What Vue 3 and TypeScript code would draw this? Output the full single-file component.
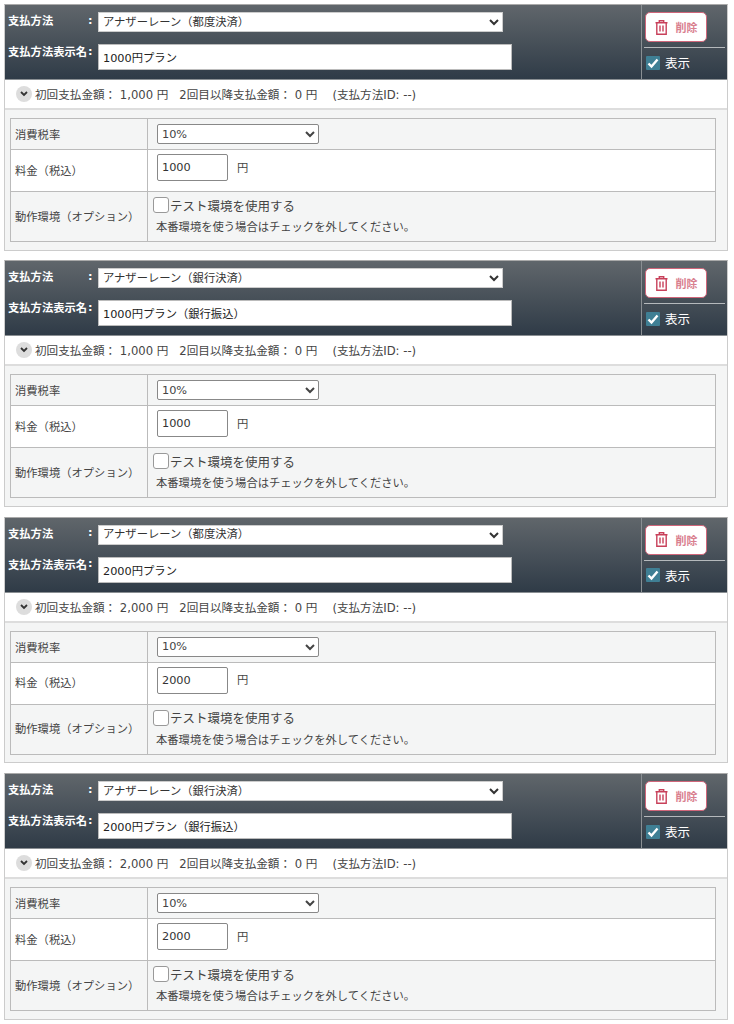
<script setup lang="ts">
interface Plan { method: string; name: string; first: string; price: string }
const plans: Plan[] = [
  { method: 'アナザーレーン（都度決済）', name: '1000円プラン', first: '1,000', price: '1000' },
  { method: 'アナザーレーン（銀行決済）', name: '1000円プラン（銀行振込）', first: '1,000', price: '1000' },
  { method: 'アナザーレーン（都度決済）', name: '2000円プラン', first: '2,000', price: '2000' },
  { method: 'アナザーレーン（銀行決済）', name: '2000円プラン（銀行振込）', first: '2,000', price: '2000' },
]
</script>

<template>
  <div class="page">
    <section v-for="(p, i) in plans" :key="i" class="card">
      <header class="head">
        <div class="fields">
          <div class="row r1">
            <label class="lbl">支払方法</label><span class="colon">:</span>
            <select class="method"><option>{{ p.method }}</option></select>
          </div>
          <div class="row r2">
            <label class="lbl">支払方法表示名</label><span class="colon">:</span>
            <input class="name" type="text" :value="p.name" />
          </div>
        </div>
        <div class="side">
          <button class="del" type="button">
            <svg width="13" height="15" viewBox="0 0 13 15" fill="none" stroke="#c8405a" stroke-width="1.400">
              <path d="M0.500 2.700h12M4.300 2.700V0.800h4.400v1.900M1.800 2.700V14.200h9.400V2.700" />
              <path d="M5 5.500v6M8 5.500v6" />
            </svg>
            <span>削除</span>
          </button>
          <label class="show">
            <span class="tick">
              <svg width="14" height="14" viewBox="0 0 14 14" fill="none" stroke="#fff" stroke-width="2.400"><path d="M2.500 7.500l3 3 6-7" /></svg>
            </span>
            <span>表示</span>
          </label>
        </div>
      </header>
      <div class="summary">
        <span class="toggle">
          <svg width="8" height="6" viewBox="0 0 8 6" fill="none" stroke="#333" stroke-width="1.800"><path d="M1 1l3 3 3-3" /></svg>
        </span>
        <span class="sumtext">初回支払金額： {{ p.first }} 円</span>
        <span class="sumtext s2">2回目以降支払金額： 0 円</span>
        <span class="sumtext s3">(支払方法ID: --)</span>
      </div>
      <div class="body">
        <div class="table">
          <div class="th t1">消費税率</div>
          <div class="td t1">
            <select class="tax"><option>10%</option></select>
          </div>
          <div class="th t2"><span class="up">料金（税込）</span></div>
          <div class="td t2 white">
            <input class="price" type="text" :value="p.price" />
            <span class="yen">円</span>
          </div>
          <div class="th t3"><span class="up">動作環境（オプション）</span></div>
          <div class="td t3">
            <label class="test"><span class="box"></span><span>テスト環境を使用する</span></label>
            <p class="note">本番環境を使う場合はチェックを外してください。</p>
          </div>
        </div>
      </div>
    </section>
  </div>
</template>

<style>
body { background: #fff; }
</style>

<style scoped>
.page {
  width: 734px;
  height: 1024px;
  overflow: hidden;
  box-sizing: border-box;
  padding: 4px 6px 0 4px;
  display: flex;
  flex-direction: column;
  gap: 9.900px;
  font-family: "DejaVu Sans", "Noto Sans CJK JP", sans-serif;
  color: #444;
  font-size: 11.300px;
}
.card {
  height: 246.500px;
  flex: none;
  box-sizing: border-box;
  border: 1px solid #ccc;
  border-top-color: #aaa;
  background: #f4f5f5;
  display: flex;
  flex-direction: column;
}
.head {
  height: 75px;
  flex: none;
  box-sizing: border-box;
  display: flex;
  background: linear-gradient(#60666b, #2f3b47);
  border-bottom: 1px solid #8a8f93;
}
.fields { flex: 1; padding-top: 7px; }
.row { display: flex; align-items: center; }
.r1 { height: 20px; }
.r2 { height: 26px; margin-top: 12px; }
.lbl {
  width: 83px;
  padding-left: 3px;
  box-sizing: border-box;
  color: #fff;
  font-weight: 700;
  font-size: 11.300px;
  white-space: nowrap;
  position: relative;
  top: -2px;
}
.r2 .lbl { top: -6px; }
.colon { width: 10px; color: #fff; font-weight: 700; font-size: 11.300px; position: relative; top: -2px; }
.r2 .colon { top: -6px; }
.method {
  width: 405px;
  height: 20px;
  margin: 0;
  padding: 0;
  border: 1px solid #ccc;
  background-color: #fff;
  font: 11.300px "DejaVu Sans", "Noto Sans CJK JP", sans-serif;
  color: #333;
}
.name {
  width: 414px;
  height: 26px;
  box-sizing: border-box;
  margin: 0;
  padding: 0 4px;
  border: 1px solid #bbb;
  background: #fff;
  font: 11.300px "DejaVu Sans", "Noto Sans CJK JP", sans-serif;
  color: #222;
  outline: none;
}
.side {
  width: 86px;
  flex: none;
  box-sizing: border-box;
  border-left: 1px solid #8a8f93;
  padding: 7px 2px 0 2px;
}
.del {
  width: 62px;
  height: 30px;
  margin: 0 0 0 1px;
  padding: 0;
  box-sizing: border-box;
  display: flex;
  align-items: center;
  justify-content: center;
  gap: 8px;
  background: #fff;
  border: 1px solid #d0667a;
  border-radius: 5px;
  color: #d9808f;
  font: 700 11px "DejaVu Sans", "Noto Sans CJK JP", sans-serif;
}
.show {
  display: flex;
  align-items: center;
  gap: 5px;
  margin-top: 5px;
  padding: 5px 0 0 2px;
  border-top: 1px solid #b5b9bc;
  color: #fff;
  font-size: 12.500px;
}
.tick {
  width: 14px;
  height: 14px;
  background: #3f7f94;
  border-radius: 1px;
  display: flex;
}
.summary {
  height: 30px;
  flex: none;
  box-sizing: border-box;
  background: #fff;
  border-bottom: 2px solid #ddd;
  display: flex;
  align-items: center;
  padding-left: 11px;
  font-size: 11.600px;
  color: #444;
}
.toggle {
  width: 16px;
  height: 16px;
  border-radius: 50%;
  background: #ddd;
  display: flex;
  align-items: center;
  justify-content: center;
  margin-right: 3px;
}
.sumtext { white-space: pre; }
.s2 { margin-left: 11px; }
.s3 { margin-left: 15px; }
.body { flex: 1; padding: 8px 11px 9px 5px; }
.table {
  height: 122px;
  display: grid;
  grid-template-columns: 137px 1fr;
  grid-template-rows: 31px 42px 1fr;
  border: 1px solid #bbb;
  font-size: 11.300px;
  color: #444;
}
.th {
  display: flex;
  align-items: center;
  padding-left: 4px;
  border-right: 1px solid #bbb;
  white-space: nowrap;
}
.up { position: relative; top: -1px; }
.td { padding-left: 9px; display: flex; align-items: center; }
.t1 { border-bottom: 1px solid #bbb; background: #f4f5f5; }
.t2 { border-bottom: 1px solid #bbb; background: #fff; }
.t3 { background: #f4f5f5; }
.t3.td { flex-direction: column; align-items: flex-start; padding-left: 5px; }
.tax {
  width: 162px;
  height: 20px;
  margin: 0;
  padding: 0;
  background: #fff;
  border: 1px solid #888;
  border-radius: 2px;
  font: 11.300px "DejaVu Sans", "Noto Sans CJK JP", sans-serif;
  color: #444;
}
.price {
  width: 71px;
  height: 27px;
  box-sizing: border-box;
  margin: 0;
  padding: 0 4px;
  border: 1px solid #888;
  border-radius: 2px;
  font: 11.300px "DejaVu Sans", "Noto Sans CJK JP", sans-serif;
  color: #333;
  outline: none;
  position: relative;
  top: -3px;
}
.yen { margin-left: 9px; position: relative; top: -4px; }
.test {
  display: flex;
  align-items: center;
  height: 16px;
  margin-top: 5px;
  font-size: 12.500px;
  color: #444;
}
.box {
  width: 16px;
  height: 16px;
  box-sizing: border-box;
  background: #fff;
  border: 1px solid #999;
  border-radius: 3px;
  margin-right: 1px;
}
.note { margin: 5px 0 0 3px; font-size: 11.300px; white-space: nowrap; }
</style>
